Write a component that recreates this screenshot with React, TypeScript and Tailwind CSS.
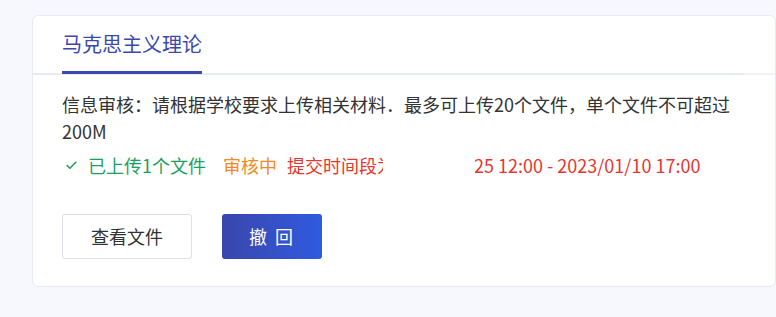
import React from 'react';
import { Check } from 'lucide-react';

const FONT = "font-['Noto_Sans_CJK_SC','Noto_Sans',sans-serif]";

const App: React.FC = () => {
    return (
        <div className={`w-[776px] h-[317px] bg-[#f7f8fd] pt-[15px] pl-[32px] ${FONT}`}>
            <div className="w-[744px] h-[272px] bg-white border border-[#e9ebf3] rounded-[6px]">
                {/* tab header */}
                <div className="flex">
                    <div className="flex-1 h-[59px] pl-[29px] border-b-2 border-[#e8ebf3]">
                        <div className="h-[58px] w-max flex items-center border-b-[3px] border-[#3b48ae] text-[20px] text-[#3b48ae] leading-none">
                            马克思主义理论
                        </div>
                    </div>
                    <div className="w-[31px] h-[59px] border-b-2 border-[#f1f2f8]"></div>
                </div>

                <div className="px-[29px] pt-[16px]">
                    <p className="text-[18px] leading-[27px] text-[#333]">
                        信息审核：请根据学校要求上传相关材料．最多可上传20个文件，单个文件不可超过200M
                    </p>

                    <div className="relative mt-[7px] h-[27px] flex items-center text-[18px] leading-[27px] whitespace-nowrap">
                        <Check className="ml-[3px] w-[13px] h-[13px] text-[#19a05e]" strokeWidth={3} />
                        <span className="ml-[10px] text-[#19a05e]">已上传1个文件</span>
                        <span className="ml-[17px] text-[#f4891f]">审核中</span>
                        <span className="ml-[10px] text-[#e8362f]">提交时间段为:2022/12/25 12:00 - 2023/01/10 17:00</span>
                        {/* masked part of the time range */}
                        <div className="absolute left-[321px] top-0 h-full w-[92px] bg-white"></div>
                    </div>

                    <div className="mt-[35px] flex gap-[30px]">
                        <button className="w-[130px] h-[45px] border border-[#dcdfe7] rounded-[3px] bg-white text-[18px] text-[#333]">
                            查看文件
                        </button>
                        <button className="w-[100px] h-[45px] rounded-[3px] bg-gradient-to-r from-[#3946ac] to-[#2f5ae0] text-[18px] text-white tracking-[2px]">
                            撤 回
                        </button>
                    </div>
                </div>
            </div>
        </div>
    );
};

export default App;
